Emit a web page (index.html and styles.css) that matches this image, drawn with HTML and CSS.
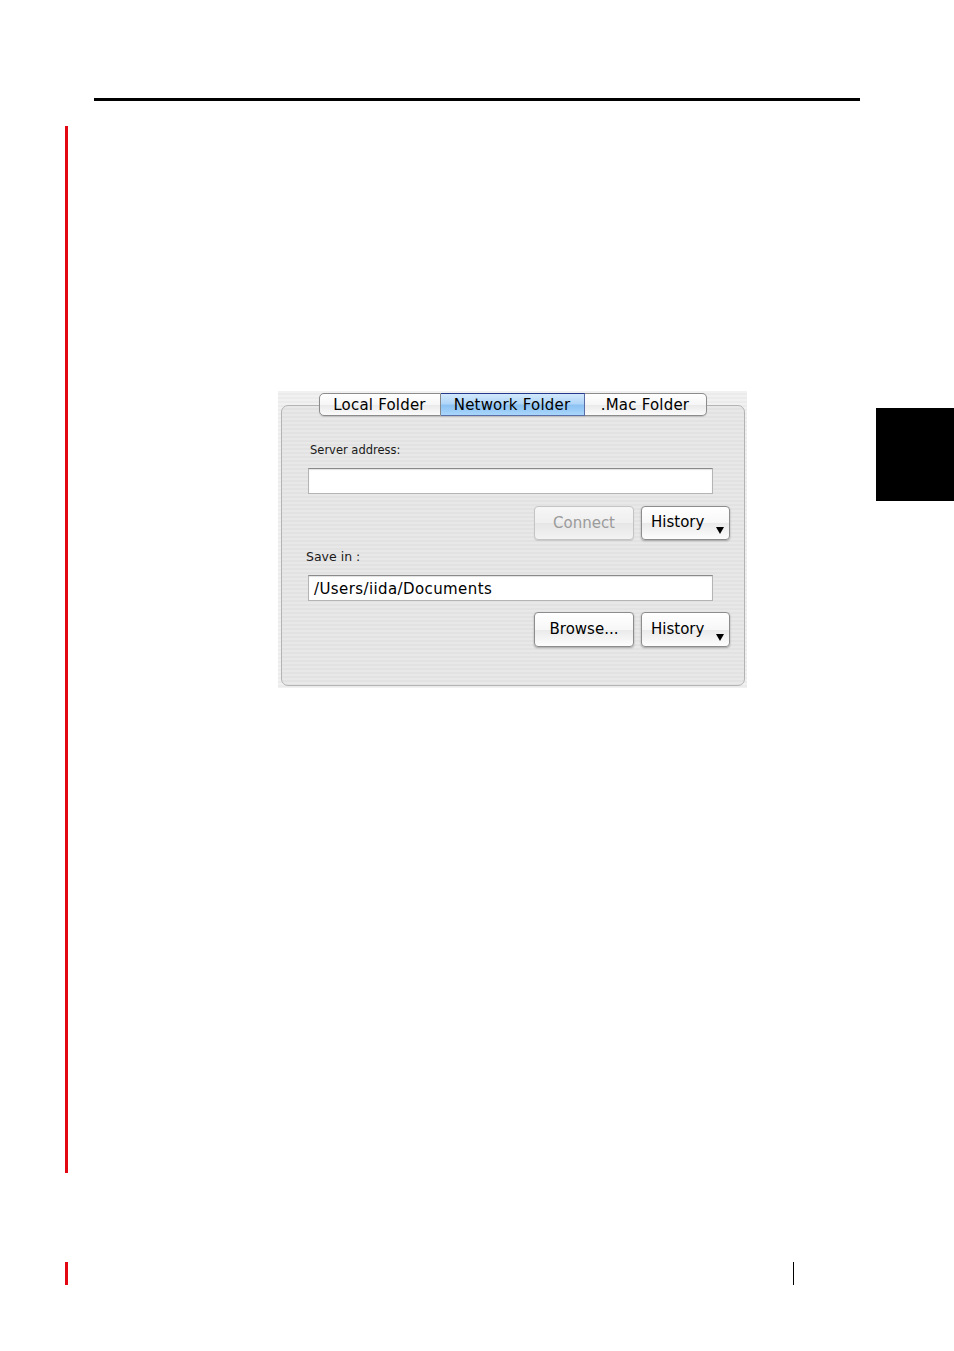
FILE: index.html
```html
<!DOCTYPE html>
<html lang="en">
<head>
  <meta charset="UTF-8">
  <title>Network Folder</title>
  <link rel="stylesheet" href="styles.css">
</head>
<body>
<div class="page">
  <div class="top-rule"></div>

  <div class="content">
    <div class="margin-bar"></div>

    <div class="main">
      <div class="dialog">
        <div class="tabs">
          <div class="tab tab-first">Local Folder</div>
          <div class="tab tab-active">Network Folder</div>
          <div class="tab tab-last">.Mac Folder</div>
        </div>

        <div class="group">
          <div class="label label-server">Server address:</div>
          <div class="field"></div>
          <div class="button-row">
            <div class="btn btn-connect disabled">Connect</div>
            <div class="btn btn-history">History<span class="arrow"></span></div>
          </div>

          <div class="label label-save">Save in :</div>
          <div class="field field-path">/Users/iida/Documents</div>
          <div class="button-row">
            <div class="btn btn-browse">Browse...</div>
            <div class="btn btn-history">History<span class="arrow"></span></div>
          </div>
        </div>
      </div>
    </div>

    <div class="thumb"></div>
  </div>

  <div class="footer">
    <div class="footer-bar"></div>
    <div class="footer-line"></div>
  </div>
</div>
</body>
</html>
```

FILE: styles.css
```css
* {
  margin: 0;
  padding: 0;
  box-sizing: border-box;
}
body {
  background: #fff;
  font-family: "DejaVu Sans", "Liberation Sans", sans-serif;
  color: #000;
}
.page {
  width: 954px;
  height: 1351px;
  overflow: hidden;
}
.top-rule {
  margin: 98px 94px 0 94px;
  width: 766px;
  height: 3px;
  background: #000;
}

.content {
  display: flex;
  margin-top: 25px;
}
.margin-bar {
  margin-left: 65px;
  width: 3px;
  height: 1047px;
  background: #e30613;
}
.main {
  width: 808px;
}
.thumb {
  margin-top: 282px;
  width: 78px;
  height: 93px;
  background: #000;
}

/* dialog screenshot */
.dialog {
  margin: 265px 0 0 210px;
  width: 469px;
  height: 297px;
  padding: 2px 2px 2px 3px;
  background: repeating-linear-gradient(#f1f1f1 0 2px, #ebebeb 2px 4px);
  display: flex;
  flex-direction: column;
}
.tabs {
  position: relative;
  z-index: 1;
  display: flex;
  justify-content: center;
  margin-left: -1px;
  height: 23px;
}
.tab {
  height: 23px;
  font-size: 15px;
  line-height: 21px;
  padding-top: 1px;
  letter-spacing: 0.2px;
  text-align: center;
  border: 1px solid #8c8c8c;
  border-left: none;
  background: linear-gradient(#ffffff, #f6f6f6 50%, #e9e9e9 51%, #fbfbfb);
  box-shadow: 0 1px 1px rgba(0, 0, 0, 0.15);
}
.tab-first {
  width: 122px;
  border-left: 1px solid #8c8c8c;
  border-radius: 5px 0 0 5px;
}
.tab-active {
  width: 144px;
  border-color: #5a6fa8;
  border-top-color: #233a8c;
  background: linear-gradient(#d3e8fc, #b0d6f8 45%, #8cc2f2 55%, #a9d6fc);
}
.tab-last {
  width: 122px;
  border-radius: 0 5px 5px 0;
}

.group {
  margin-top: -11px;
  flex: 1;
  border: 1px solid #b3b3b3;
  border-radius: 7px;
  background: repeating-linear-gradient(#e8e8e8 0 2px, #e2e2e2 2px 4px);
  padding: 0 14px 0 26px;
  display: flex;
  flex-direction: column;
}
.label {
  line-height: 15px;
  color: #1a1a1a;
}
.label-server {
  margin: 37px 0 0 2px;
  font-size: 11.5px;
}
.label-save {
  margin: 9px 0 0 -2px;
  font-size: 12.5px;
}
.field {
  margin-top: 10px;
  width: 405px;
  height: 26px;
  background: #fff;
  border: 1px solid #b4b4b4;
  border-top-color: #8a8a8a;
  box-shadow: inset 0 1px 1px rgba(0, 0, 0, 0.12);
  padding: 1px 0 0 5px;
  font-size: 15px;
  line-height: 25px;
}
.field-path {
  margin-top: 11px;
  letter-spacing: 0.4px;
}
.button-row {
  display: flex;
  justify-content: flex-end;
  gap: 7px;
  margin-top: 12px;
}
.label-save ~ .button-row {
  margin-top: 11px;
}
.btn {
  position: relative;
  height: 34px;
  font-size: 15px;
  line-height: 30px;
  text-align: center;
  border: 1px solid #8d8d8d;
  border-radius: 4px;
  background: linear-gradient(#ffffff, #f7f7f7 50%, #eaeaea 51%, #fdfdfd);
  box-shadow: 0 1px 2px rgba(0, 0, 0, 0.3);
}
.label-save ~ .button-row .btn {
  height: 35px;
  line-height: 32px;
}
.btn-connect,
.btn-browse {
  width: 100px;
  line-height: 32px;
}
.btn-history {
  width: 89px;
  text-align: left;
  padding-left: 9px;
}
.disabled {
  color: #9b9b9b;
  border-color: #c4c4c4;
  background: linear-gradient(#f6f6f6, #efefef 50%, #e6e6e6 51%, #f3f3f3);
  box-shadow: 0 1px 1px rgba(0, 0, 0, 0.12);
}
.arrow {
  position: absolute;
  right: 5px;
  bottom: 5px;
  width: 0;
  height: 0;
  border-left: 4px solid transparent;
  border-right: 4px solid transparent;
  border-top: 7px solid #000;
}

.footer {
  display: flex;
  margin-top: 89px;
}
.footer-bar {
  margin-left: 65px;
  width: 3px;
  height: 23px;
  background: #e30613;
}
.footer-line {
  margin-left: 725px;
  width: 1px;
  height: 23px;
  background: #000;
}
```
